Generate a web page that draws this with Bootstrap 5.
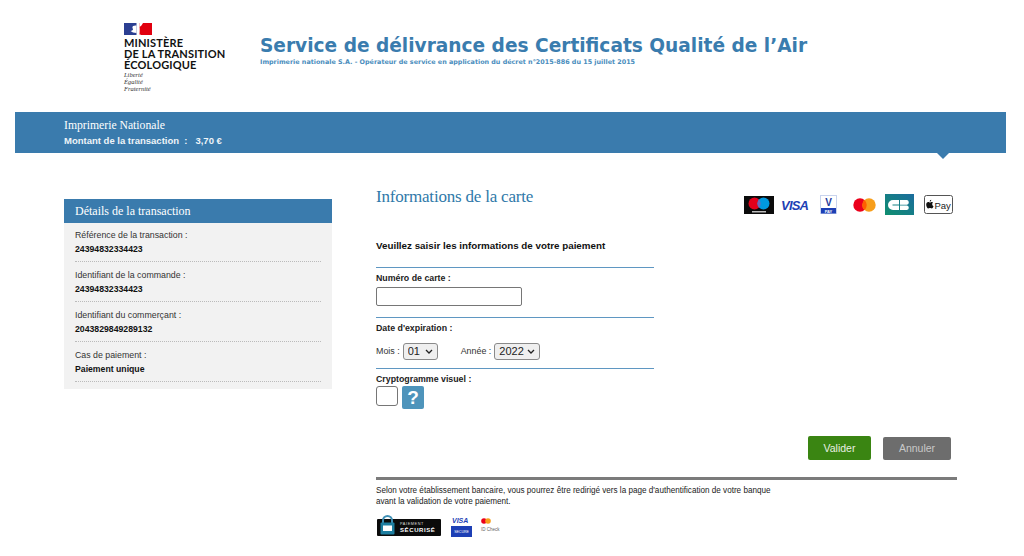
<!DOCTYPE html>
<html lang="fr"><head><meta charset="utf-8"><title>Paiement</title>
<link rel="stylesheet" href="https://cdn.jsdelivr.net/npm/bootstrap@5.3.0/dist/css/bootstrap.min.css">
<style>
html,body{height:556px;overflow:hidden}
body{background:#fff;font-family:"Liberation Sans",Arial,sans-serif;font-size:10px;color:#222;line-height:1.2}
.top-head{height:112px;padding-left:124px}
.logo-box{width:136px;padding-top:23px}
.flag-mark{display:block;margin-bottom:2px}
.min-name{font-family:Lato,sans-serif;font-weight:700;font-size:11px;line-height:11px;color:#111;letter-spacing:.15px}
.devise{font-family:"Liberation Serif",serif;font-style:italic;font-size:6.5px;line-height:6.800px;color:#333;margin-top:2px}
.head-text{padding-top:34px}
.main-title{font-family:"DejaVu Sans",sans-serif;font-weight:700;font-size:18.57px;line-height:24px;color:#3a7cae;margin:0}
.sub-title{font-family:"DejaVu Sans",sans-serif;font-weight:700;font-size:6.4px;line-height:9px;color:#4a8dbd;margin:0}
.blue-band{margin:0 18px 0 15px;height:41px;background:#3a7bad;color:#fff;padding:6px 0 0 49px;position:relative}
.band-arrow{position:absolute;left:922px;top:100%;width:0;height:0;border-left:6.5px solid transparent;border-right:6.5px solid transparent;border-top:6.5px solid #3a7bad}
.serif-t{font-family:"Liberation Serif",serif;font-size:11.7px;line-height:15px}
.band-amt{font-weight:700;font-size:9.5px;line-height:11px;margin-top:2px;color:#eef4f8;white-space:pre}
.page-cols{padding:46px 0 0 64px}
.side-box{width:268px;background:#f2f2f2;align-self:flex-start;height:190px;margin-right:44px}
.side-head{height:24px;background:#3a7bad;color:#fff;padding:4px 0 0 11px;font-size:12px;font-family:"Liberation Serif",serif;line-height:17px}
.side-list{padding:6px 11px 0 11px}
.side-item{height:40px;border-bottom:1px dotted #bbb;padding-top:8px;font-size:8.8px;line-height:11px;color:#333}
.side-item:first-child{height:33px;padding-top:1px}
.side-item b{display:block;color:#111;font-size:8.7px;margin-top:3px}
.form-area{width:581px}
.card-title-text{font-family:"Liberation Serif",serif;font-size:17px;line-height:20px;color:#2f79a9;margin:-12px 0 0;letter-spacing:-.2px}
.brand-row{margin-top:-5px;padding-right:4px}
.intro{font-weight:700;font-size:9.8px;line-height:12px;margin:0;color:#111;padding-top:24px;height:51px}
.form-part{width:278px;border-top:1px solid #5f97c2}
.part-a{height:50px}
.part-b{height:51px}
.fld-label{font-weight:700;font-size:8.8px;line-height:11px;display:block;color:#222;margin:0;padding-top:5px}
.card-input{display:block;width:146px;height:19px;border:1px solid #767676;border-radius:2px;margin-top:3px;background:#fff}
.date-row{margin-top:9px}
.sel-mini{height:17px;border:1px solid #8a8a8a;border-radius:3px;appearance:none;-webkit-appearance:none;background:#efefef url("data:image/svg+xml,%3Csvg xmlns='http://www.w3.org/2000/svg' width='8' height='5'%3E%3Cpath d='M1 1l3 3 3-3' fill='none' stroke='%23222' stroke-width='1.300'/%3E%3C/svg%3E") no-repeat right 4px center;font-size:11px;line-height:15px;padding:0 0 0 4px;font-family:"Liberation Sans",sans-serif;color:#222}
.sel-m{width:35px}
.sel-y{width:46px}
.sel-label{font-size:8.9px;color:#333}
.lab-m{margin-right:3px}
.lab-y{margin:0 3px 0 23px}
.crypto-row{margin-top:1px}
.crypto-input{width:22px;height:20px;border:1px solid #767676;border-radius:3px;background:#fff}
.help-box{width:22px;height:23px;background:#4e94bb;color:#fff;font-weight:700;font-size:19px;line-height:23px;text-align:center;border-radius:2px;margin-left:4px}
.btn-row{margin-top:27px}
.act-btn{height:24px;border-radius:2px;border:0;font-size:10.5px;padding:0;font-family:"Liberation Sans",sans-serif}
.btn-val{background:#3a8512;width:63px;color:#e8efe3}
.btn-ann{background:#6d6d6d;width:68px;color:#c9c9c9;margin-left:12px;height:23px;margin-right:6px;align-self:flex-end}
.thick-rule{height:3px;background:#7b7b7b;margin-top:17px}
.legal{font-size:8.13px;line-height:11px;color:#222;margin:5px 0 0}
.bottom-logos{margin-top:8px}
</style></head><body>
<header class="top-head d-flex">
 <div class="logo-box">
  <svg class="flag-mark" width="28" height="12" viewBox="0 0 28 12"><rect width="28" height="12" fill="#fff"/><rect width="12.5" height="12" fill="#2b3f92"/><rect x="15.5" width="12.5" height="12" fill="#e1000f"/><path d="M9 3c2-1 3-.5 3.500-.5V10L9 9.500 6.500 8c1.500 0 2-1 2.500-1.500S7.500 5 9 3z" fill="#fff"/><path d="M19 0c-1 2-2 3-3.500 4-.5 1-.5 4 0 7l1.500 1h-1.500V0z" fill="#fff"/></svg>
  <div class="min-name">MINISTÈRE<br>DE LA TRANSITION<br>ÉCOLOGIQUE</div>
  <div class="devise">Liberté<br>Égalité<br>Fraternité</div>
 </div>
 <div class="head-text">
  <h1 class="main-title">Service de délivrance des Certificats Qualité de l’Air</h1>
  <p class="sub-title">Imprimerie nationale S.A. - Opérateur de service en application du décret n°2015-886 du 15 juillet 2015</p>
 </div>
</header>
<section class="blue-band">
 <div class="serif-t">Imprimerie Nationale</div>
 <div class="band-amt">Montant de la transaction  :   3,70 €</div>
 <span class="band-arrow"></span>
</section>
<main class="page-cols d-flex">
 <aside class="side-box">
  <div class="side-head">Détails de la transaction</div>
  <div class="side-list">
   <div class="side-item">Référence de la transaction :<b>24394832334423</b></div>
   <div class="side-item">Identifiant de la commande :<b>24394832334423</b></div>
   <div class="side-item">Identifiant du commerçant :<b>2043829849289132</b></div>
   <div class="side-item">Cas de paiement :<b>Paiement unique</b></div>
  </div>
 </aside>
 <div class="form-area">
  <div class="d-flex justify-content-between align-items-start">
   <h2 class="card-title-text">Informations de la carte</h2>
   <div class="brand-row d-flex align-items-center">
    <svg width="209" height="22" viewBox="0 -1 209 22">
     <rect x="0" y="1" width="30" height="18" fill="#0b0b0b"/><circle cx="10.500" cy="8.500" r="6" fill="#e3001b"/><circle cx="19.500" cy="8.500" r="6" fill="#0099df"/><path d="M15 4.400a6 6 0 0 1 0 8.200 6 6 0 0 1 0-8.200z" fill="#6c6bbd"/><rect x="8" y="16" width="14" height="1.500" fill="#bbb"/>
     <text x="37" y="15" textLength="28" font-family="Liberation Sans" font-style="italic" font-weight="700" font-size="13" fill="#1d3fb5">VISA</text>
     <rect x="76.500" y="0.500" width="16" height="18" fill="#fff" stroke="#c9d4ee"/><text x="84.500" y="10.500" text-anchor="middle" font-family="Liberation Sans" font-weight="700" font-size="10" fill="#1d3a9c">V</text><rect x="77" y="13" width="15" height="5.500" fill="#1d3fb5"/><text x="84.500" y="17.500" text-anchor="middle" font-family="Liberation Sans" font-size="4" font-weight="700" fill="#fff">PAY</text>
     <circle cx="116" cy="10" r="6.700" fill="#eb001b"/><circle cx="125" cy="10" r="6.700" fill="#f79e1b"/><path d="M120.500 5a6.700 6.700 0 0 1 0 10 6.700 6.700 0 0 1 0-10z" fill="#ff5f00"/>
     <defs><linearGradient id="cbg" x1="0" y1="1" x2="1" y2="0"><stop offset="0" stop-color="#0f8f6f"/><stop offset="1" stop-color="#1b6c9e"/></linearGradient></defs>
     <rect x="141" y="-1" width="29" height="21" fill="url(#cbg)"/>
     <path d="M155 5h-6a5 5 0 0 0 0 10h6v-4.500h-6.500v-1H155z" fill="#fff"/><path d="M156 5h7a2.500 2.500 0 0 1 0 4.800h-7zM156 10.500h7a2.300 2.300 0 0 1 0 4.500h-7z" fill="#fff"/>
     <rect x="180.500" y="0.500" width="28" height="18" rx="2" fill="#fff" stroke="#555"/>
     <path d="M188 7c-1 0-1.300.5-2 .5s-1-.5-1.800-.5c-1.100 0-2 1-2 2.800 0 1.800 1.200 3.700 2.100 3.700.7 0 .9-.4 1.700-.4s1 .4 1.700.4c.8 0 1.500-1.200 1.800-2.200-1.600-.7-1.700-3-.5-3.800-.2-.3-.5-.5-1-.5zM186.500 6.500c.6-.5.800-1.200.7-1.800-.7.100-1.500.8-1.500 1.800z" fill="#111"/>
     <text x="190.500" y="13.500" font-family="Liberation Sans" font-size="9.500" fill="#222">Pay</text>
    </svg>
   </div>
  </div>
  <p class="intro">Veuillez saisir les informations de votre paiement</p>
  <div class="form-part part-a">
   <label class="fld-label" for="cardnum">Numéro de carte :</label>
   <input class="card-input" id="cardnum" type="text">
  </div>
  <div class="form-part part-b">
   <span class="fld-label">Date d'expiration :</span>
   <div class="d-flex align-items-center date-row">
    <span class="sel-label lab-m">Mois :</span><select class="sel-mini sel-m" aria-label="Mois"><option>01</option></select>
    <span class="sel-label lab-y">Année :</span><select class="sel-mini sel-y" aria-label="Année"><option>2022</option></select>
   </div>
  </div>
  <div class="form-part">
   <span class="fld-label">Cryptogramme visuel :</span>
   <div class="d-flex align-items-start crypto-row"><input class="crypto-input" type="text" aria-label="Cryptogramme"><span class="help-box">?</span></div>
  </div>
  <div class="d-flex justify-content-end btn-row">
   <button class="act-btn btn-val" type="button">Valider</button>
   <button class="act-btn btn-ann" type="button">Annuler</button>
  </div>
  <div class="thick-rule"></div>
  <p class="legal">Selon votre établissement bancaire, vous pourrez être redirigé vers la page d'authentification de votre banque<br>avant la validation de votre paiement.</p>
  <div class="bottom-logos d-flex">
   <svg width="130" height="23" viewBox="0 0 130 23">
    <rect x="1" y="4" width="64" height="17" rx="1" fill="#0b0b0b"/>
    <path d="M7 8V5.500a4.500 4.500 0 0 1 9 0V8" fill="none" stroke="#3f8fb5" stroke-width="2"/>
    <rect x="4.500" y="7.500" width="14" height="12" rx="1" fill="#1d7ea0"/><rect x="7" y="10.500" width="9" height="5.500" fill="#fff"/>
    <text x="24" y="10" font-family="Liberation Sans" font-size="3.800" fill="#ddd" letter-spacing=".6">PAIEMENT</text>
    <text x="24" y="17" font-family="Liberation Sans" font-weight="700" font-size="6" fill="#fff" letter-spacing=".6">SÉCURISÉ</text>
    <text x="76" y="8" font-family="Liberation Sans" font-style="italic" font-weight="700" font-size="7" fill="#1d3fb5">VISA</text>
    <rect x="75" y="11" width="21" height="11" fill="#1d3fb5"/><text x="85.500" y="18" text-anchor="middle" font-family="Liberation Sans" font-size="3.500" fill="#fff">SECURE</text>
    <circle cx="108" cy="6" r="2.800" fill="#eb001b"/><circle cx="112" cy="6" r="2.800" fill="#f79e1b"/>
    <text x="105" y="16" font-family="Liberation Sans" font-size="4.500" fill="#666">ID Check</text>
   </svg>
  </div>
 </div>
</main>
</body></html>
